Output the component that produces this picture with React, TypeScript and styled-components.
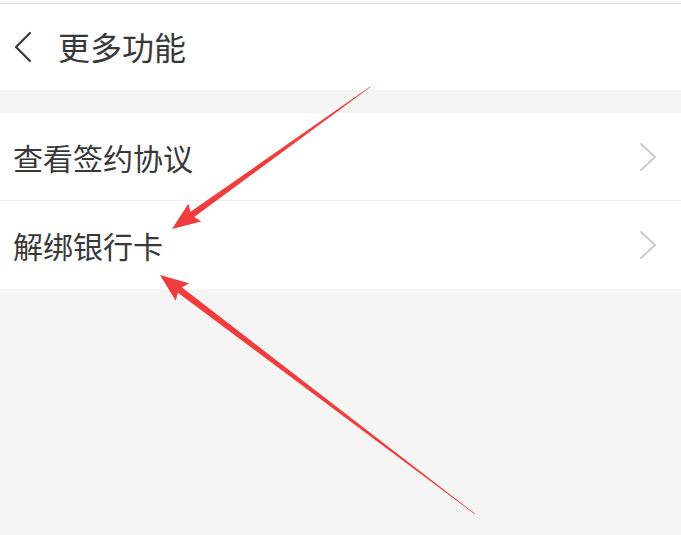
import * as React from "react";
import styled, { createGlobalStyle } from "styled-components";

const GlobalStyle = createGlobalStyle`
  html, body {
    margin: 0;
    padding: 0;
    background: #f5f5f5;
  }
  * {
    box-sizing: border-box;
  }
`;

const SPage = styled.div`
  position: relative;
  width: 681px;
  height: 535px;
  overflow: hidden;
  background: #f5f5f5;
  padding-top: 3px;
  font-family: "Noto Sans CJK SC", "Noto Sans", sans-serif;
  color: #383838;
`;

const SHeaderTop = styled.div`
  height: 3px;
  background: #ffffff;
  margin-top: -3px;
`;

const SHeader = styled.div`
  height: 87px;
  background: #ffffff;
  border-top: 1px solid #dcdcdc;
  display: flex;
  align-items: center;
  padding-left: 13px;
  gap: 25px;
`;

const STitle = styled.div`
  font-size: 32px;
  line-height: 1;
  color: #383838;
  margin-top: -2px;
`;

const SList = styled.div`
  margin-top: 23px;
  background: #ffffff;
  display: flex;
  flex-direction: column;
`;

interface IRowProps {
  isLast: boolean;
}

const SRow = styled.div<IRowProps>`
  height: 88px;
  display: flex;
  align-items: center;
  justify-content: space-between;
  padding: 0 24px 0 13px;
  border-bottom: ${({ isLast }) => (isLast ? "none" : "1px solid #ececec")};
`;

const SRowLabel = styled.div`
  font-size: 30px;
  line-height: 1;
  color: #383838;
`;

const SOverlay = styled.svg`
  position: absolute;
  left: 0;
  top: 0;
  pointer-events: none;
`;

function BackIcon() {
  return (
    <svg width="20" height="32" viewBox="0 0 20 32">
      <path
        d="M17 2 L3 16 L17 30"
        fill="none"
        stroke="#383838"
        strokeWidth="2.2"
        strokeLinecap="round"
        strokeLinejoin="round"
      />
    </svg>
  );
}

function ChevronRight() {
  return (
    <svg width="18" height="28" viewBox="0 0 18 28">
      <path
        d="M2 1 L16 14 L2 27"
        fill="none"
        stroke="#c8c8c8"
        strokeWidth="1.8"
        strokeLinecap="round"
        strokeLinejoin="round"
      />
    </svg>
  );
}

type Pt = [number, number];

// tapered annotation arrow: thin at the tail, wide head at the tip
function arrowPoints(tail: Pt, tip: Pt, headLen: number, headHalf: number, shaftHalf: number) {
  const dx = tip[0] - tail[0];
  const dy = tip[1] - tail[1];
  const len = Math.hypot(dx, dy);
  const ux = dx / len;
  const uy = dy / len;
  const nx = -uy;
  const ny = ux;
  const bx = tip[0] - ux * headLen;
  const by = tip[1] - uy * headLen;
  const pts: Pt[] = [
    [tail[0] + nx * 0.3, tail[1] + ny * 0.3],
    [bx + nx * shaftHalf, by + ny * shaftHalf],
    [bx - ux * 3 + nx * headHalf, by - uy * 3 + ny * headHalf],
    [tip[0], tip[1]],
    [bx - ux * 3 - nx * headHalf, by - uy * 3 - ny * headHalf],
    [bx - nx * shaftHalf, by - ny * shaftHalf],
    [tail[0] - nx * 0.3, tail[1] - ny * 0.3],
  ];
  return pts.map((p) => `${p[0].toFixed(1)},${p[1].toFixed(1)}`).join(" ");
}

const rows = ["查看签约协议", "解绑银行卡"];

export default function App() {
  return (
    <>
      <GlobalStyle />
      <SPage>
        <SHeaderTop />
        <SHeader>
          <BackIcon />
          <STitle>更多功能</STitle>
        </SHeader>
        <SList>
          {rows.map((label, i) => (
            <SRow key={label} isLast={i === rows.length - 1}>
              <SRowLabel>{label}</SRowLabel>
              <ChevronRight />
            </SRow>
          ))}
        </SList>
        <SOverlay width="681" height="535" viewBox="0 0 681 535">
          <polygon
            points={arrowPoints([370, 87], [172, 229], 25, 11, 3.2)}
            fill="#f03c3c"
          />
          <polygon
            points={arrowPoints([475, 514], [160, 275], 25, 11, 3.4)}
            fill="#f03c3c"
          />
        </SOverlay>
      </SPage>
    </>
  );
}
